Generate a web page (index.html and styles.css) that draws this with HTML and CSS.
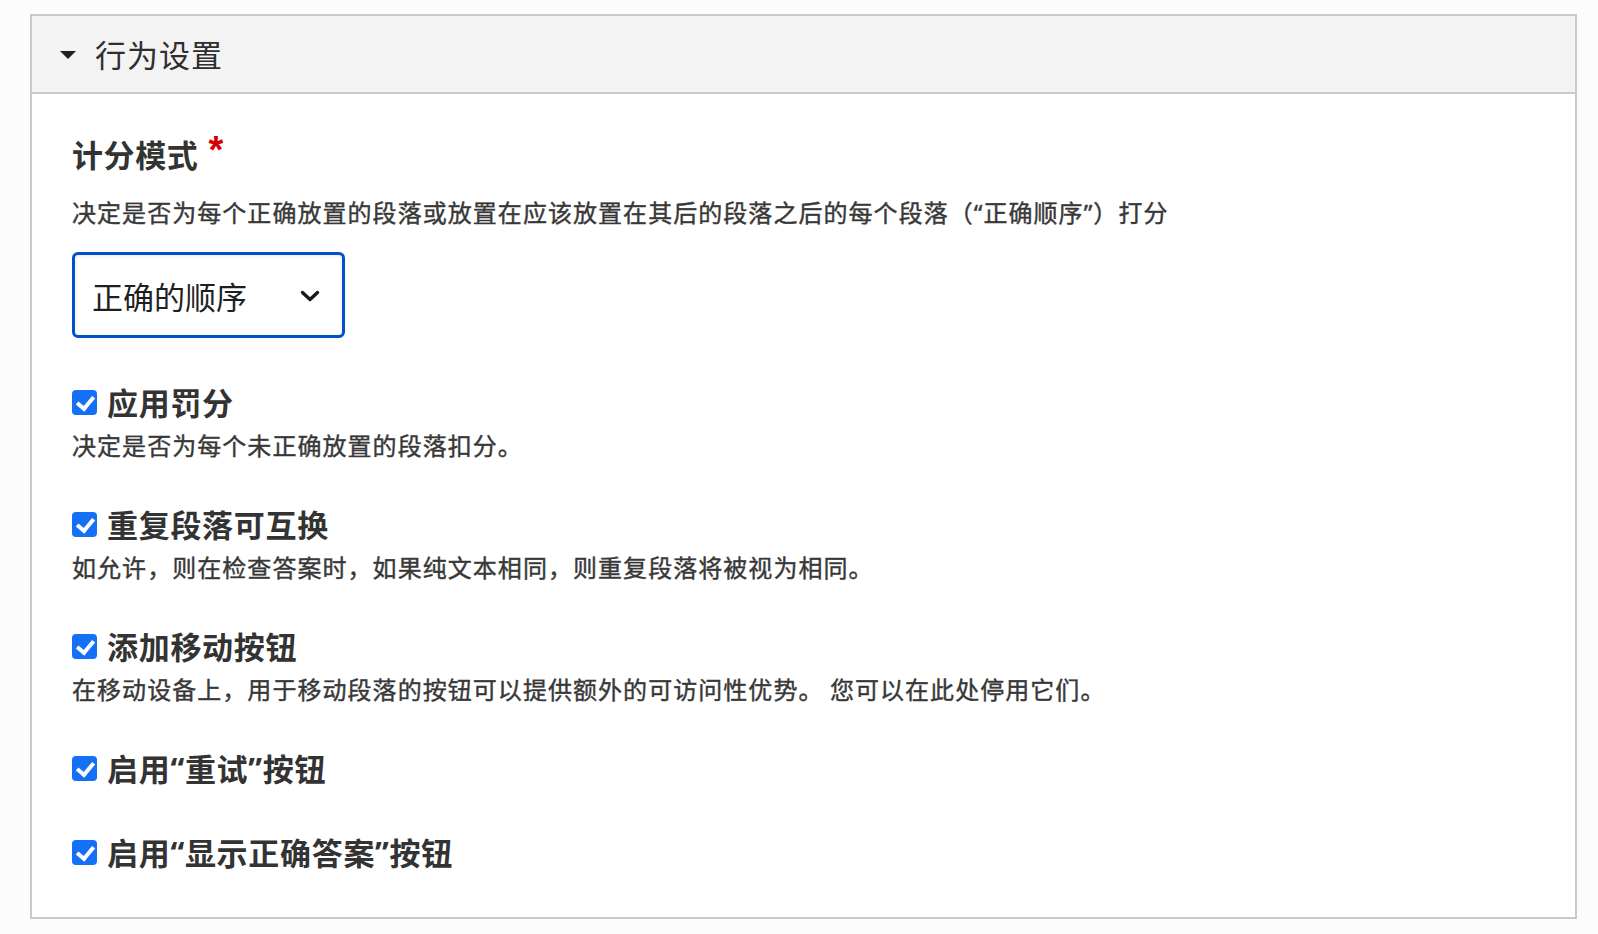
FILE: index.html
```html
<!DOCTYPE html>
<html lang="zh-CN">
  <head>
    <meta charset="UTF-8" />
    <meta name="viewport" content="width=device-width, initial-scale=1.0" />
    <title>行为设置</title>
    <link rel="stylesheet" href="styles.css">
  </head>
  <body>
    <details class="settings-box" open>
      <summary class="settings-header">
        <span class="header-arrow"></span>
        <span class="header-title">行为设置</span>
      </summary>
      <div class="settings-content">
        <div class="form-item">
          <label class="field-label" for="mode">计分模式<span class="required">*</span></label>
          <div class="field-desc">决定是否为每个正确放置的段落或放置在应该放置在其后的段落之后的每个段落（<span class="quote">“</span>正确顺序<span class="quote">”</span>）打分</div>
          <div class="select-wrap">
            <select id="mode" class="form-select">
              <option>正确的顺序</option>
              <option>正确的位置</option>
            </select>
            <svg class="select-chevron" width="22" height="14" viewBox="0 0 22 14">
              <path d="M3.5 3.5 L11 10.5 L18.5 3.5" fill="none" stroke="#1a1a1a" stroke-width="3.4" stroke-linecap="round" stroke-linejoin="round" />
            </svg>
          </div>
        </div>

        <div class="form-item check-item">
          <label class="check-label">
            <input type="checkbox" class="check-input" checked />
            <span class="check-box"></span>
            应用罚分
          </label>
          <div class="field-desc check-desc">决定是否为每个未正确放置的段落扣分。</div>
        </div>

        <div class="form-item check-item">
          <label class="check-label">
            <input type="checkbox" class="check-input" checked />
            <span class="check-box"></span>
            重复段落可互换
          </label>
          <div class="field-desc check-desc">如允许，则在检查答案时，如果纯文本相同，则重复段落将被视为相同。</div>
        </div>

        <div class="form-item check-item">
          <label class="check-label">
            <input type="checkbox" class="check-input" checked />
            <span class="check-box"></span>
            添加移动按钮
          </label>
          <div class="field-desc check-desc">在移动设备上，用于移动段落的按钮可以提供额外的可访问性优势。 您可以在此处停用它们。</div>
        </div>

        <div class="form-item check-item">
          <label class="check-label">
            <input type="checkbox" class="check-input" checked />
            <span class="check-box"></span>
            启用<span class="quote">“</span>重试<span class="quote">”</span>按钮
          </label>
        </div>

        <div class="form-item check-item check-item-last">
          <label class="check-label">
            <input type="checkbox" class="check-input" checked />
            <span class="check-box"></span>
            启用<span class="quote">“</span>显示正确答案<span class="quote">”</span>按钮
          </label>
        </div>
      </div>
    </details>
  </body>
</html>
```

FILE: styles.css
```css
body {
  margin: 0;
  padding: 14px 21px 19px 30px;
  background: #fcfcfc;
  font-family: "Noto Sans CJK SC", "Noto Sans", sans-serif;
  color: #333;
}
.settings-box {
  border: 2px solid #c9c9c9;
  background: #fff;
}
.settings-header {
  display: flex;
  align-items: center;
  height: 76px;
  padding-left: 28px;
  background: #f3f3f3;
  border-bottom: 2px solid #c9c9c9;
  list-style: none;
  cursor: pointer;
}
.settings-header::-webkit-details-marker {
  display: none;
}
.header-arrow {
  width: 0;
  height: 0;
  border-left: 8px solid transparent;
  border-right: 8px solid transparent;
  border-top: 8px solid #1f1f1f;
  margin-right: 19px;
  margin-top: 2px;
}
.header-title {
  font-size: 31px;
  font-weight: 400;
  line-height: 40px;
  color: #2e2e2e;
  letter-spacing: 1px;
}
.settings-content {
  padding: 40px 40px 45px 40px;
}
.quote {
  font-family: "Noto Sans", "Liberation Sans", sans-serif;
}
.field-label {
  display: block;
  font-size: 31px;
  font-weight: 700;
  line-height: 40px;
  letter-spacing: 0.6px;
  color: #333;
}
.required {
  color: #d20000;
  margin-left: 10px;
  font-family: "Liberation Sans", sans-serif;
  font-size: 38px;
  font-weight: 700;
  line-height: 0;
  vertical-align: 4px;
}
.field-desc {
  font-size: 24px;
  font-weight: 400;
  line-height: 34px;
  letter-spacing: 1.05px;
  color: #383838;
  -webkit-text-stroke: 0.4px #383838;
  margin-top: 21px;
}
.select-wrap {
  position: relative;
  width: 273px;
  margin-top: 22px;
}
.form-select {
  display: block;
  width: 273px;
  height: 86px;
  padding: 0 50px 0 17px;
  border: 3px solid #0051cc;
  border-radius: 6px;
  background: #fff;
  font-family: inherit;
  font-size: 31px;
  color: #1f1f1f;
  appearance: none;
  -webkit-appearance: none;
  box-shadow: inset 0 1px 4px rgba(0, 0, 0, 0.08);
}
.select-chevron {
  position: absolute;
  right: 24px;
  top: 37px;
  pointer-events: none;
}
.check-item {
  margin-top: 44px;
}
.check-item + .check-item {
  margin-top: 42px;
}
.check-item-last.check-item {
  margin-top: 44px;
}
.check-label {
  display: flex;
  align-items: center;
  font-size: 31px;
  font-weight: 700;
  line-height: 40px;
  letter-spacing: 0.7px;
  color: #333;
}
.check-input {
  display: none;
}
.check-box {
  position: relative;
  width: 25px;
  height: 25px;
  border-radius: 4px;
  background: #1471f6;
  margin-right: 10px;
  flex-shrink: 0;
}
.check-box::after {
  content: "";
  position: absolute;
  left: 8px;
  top: 3px;
  width: 7px;
  height: 13px;
  border-right: 4px solid #fff;
  border-bottom: 4px solid #fff;
  transform: rotate(40deg);
}
.check-desc {
  margin-top: 6px;
}
```
